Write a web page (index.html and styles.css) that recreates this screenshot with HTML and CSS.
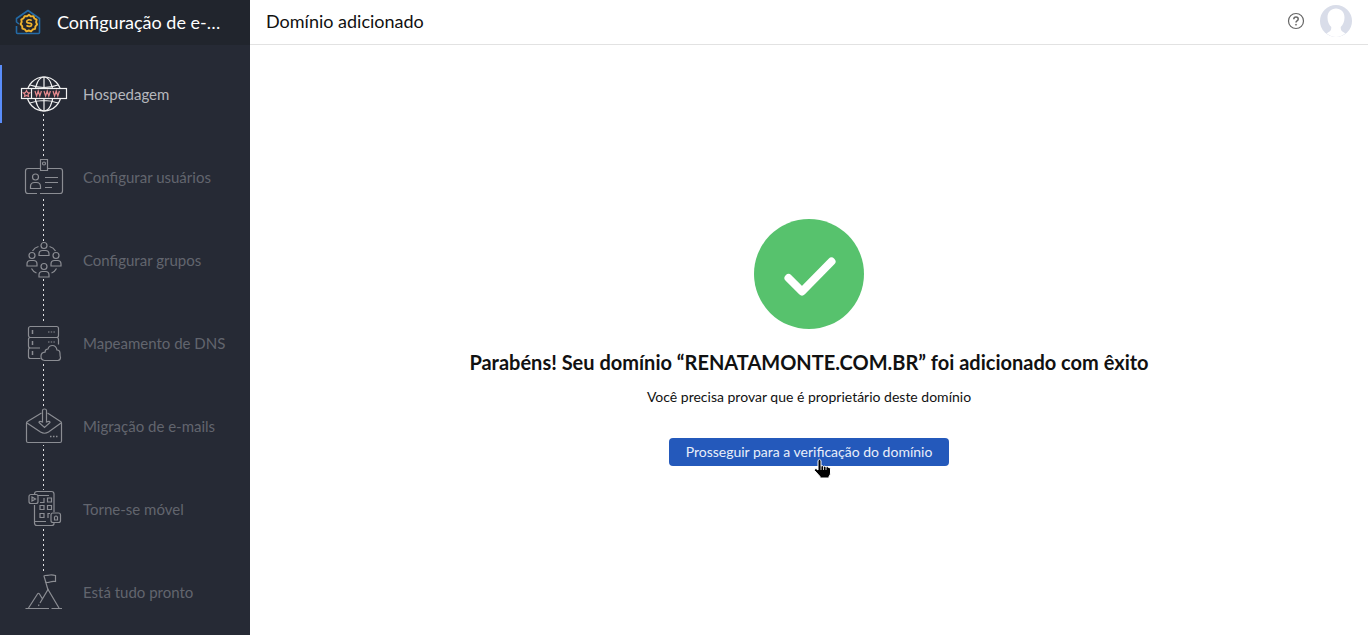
FILE: index.html
```html
<!DOCTYPE html>
<html lang="pt-BR">
<head>
  <meta charset="UTF-8">
  <meta name="viewport" content="width=device-width, initial-scale=1.0">
  <title>Configuração de e-mail</title>
  <link rel="stylesheet" href="styles.css">
</head>
<body>
  <aside class="sidebar">
    <div class="brand">
      <svg class="brand-logo" width="26" height="26" viewBox="0 0 26 26" fill="none" stroke-linejoin="round">
        <path d="M1.500 17v6.500q0 1 1 1h21q1 0 1-1V9.500L13 1.500 1.500 9.500v3.500l2.500 2" stroke="#246aa5" stroke-width="1.600"/>
        <path d="M14 5.800l1.900 1.600 2.500-.2 1 2.300 2.200 1.200-.5 2.500 1 2.300-1.700 1.800-.3 2.500-2.400.7-1.600 1.900-2.300-.9-2.400.8-1.600-2-2.400-.7-.2-2.500-1.600-1.900 1.100-2.200-.4-2.500 2.200-1.200 1.100-2.200 2.500.2z" stroke="#eeb22e" stroke-width="1.900"/>
        <path d="M16.700 11.700c-1.700-1.600-5-1-5 1 0 2.200 5 .8 5 3 0 2-3.500 2.300-5.200.7" stroke="#eeb22e" stroke-width="1.700"/>
      </svg>
      <span class="brand-name">Configuração de e-mail</span>
    </div>

    <ol class="steps">
      <li class="step active">
        <svg class="step-icon" width="48" height="38" viewBox="0 0 48 38">
          <circle cx="24" cy="19" r="17"/>
          <ellipse cx="24" cy="19" rx="9" ry="17"/>
          <path d="M24 2v34M7 19h34M10 10q14 5 28 0M10 28q14-5 28 0"/>
          <rect class="plate" x="1.500" y="13.500" width="45" height="10"/>
          <path d="M11.500 13.500v10"/>
          <path class="accent" d="M6.500 15.500l1 2 2.200.3-1.600 1.500.4 2.200-2-1-2 1 .4-2.200-1.600-1.500 2.200-.3z"/>
          <path class="accent" d="M15 16l1.600 5 1.600-5 1.600 5 1.600-5M24 16l1.600 5 1.600-5 1.600 5 1.600-5M33 16l1.600 5 1.600-5 1.600 5 1.600-5"/>
        </svg>
        <a href="#hospedagem">Hospedagem</a>
      </li>
      <li class="step">
        <svg class="step-icon" width="48" height="38" viewBox="0 0 48 38">
          <path d="M20.500 10.500H8q-2.500 0-2.500 2.500v20q0 2.500 2.500 2.500h9M20 35.500h20q2.500 0 2.500-2.500V13q0-2.500-2.500-2.500H27.500"/>
          <path d="M20.500 1.500h7v11h-7z"/>
          <circle cx="24" cy="5.500" r="1.500"/>
          <circle cx="15.500" cy="19" r="3"/>
          <path d="M10.500 30.500v-2q0-4 4-4h2q4 0 4 4v2zM25 19.500h13M25 24.500h13M25 29.500h7"/>
        </svg>
        <a href="#usuarios">Configurar usuários</a>
      </li>
      <li class="step">
        <svg class="step-icon" width="48" height="38" viewBox="0 0 48 38">
          <circle cx="24" cy="4.500" r="3"/>
          <path d="M19 14.500v-1.500q0-3.500 3.500-3.500h3q3.500 0 3.500 3.500v1.500z"/>
          <circle cx="12" cy="14.500" r="3"/>
          <path d="M7 25v-2q0-3.500 3.500-3.500h3q3.500 0 3.500 3.500v2z"/>
          <circle cx="36" cy="14.500" r="3"/>
          <path d="M31 25v-2q0-3.500 3.500-3.500h3q3.500 0 3.500 3.500v2z"/>
          <circle cx="24" cy="25.500" r="3"/>
          <path d="M19 36v-2q0-3.500 3.500-3.500h3q3.500 0 3.500 3.500v2z"/>
          <path d="M12.500 10q2-3.500 6-4.500M29.500 5.500q4 1 6 4.500M11.500 27.500q1.500 3 5 4.500M31.500 32q3.500-1.500 5-4.500"/>
        </svg>
        <a href="#grupos">Configurar grupos</a>
      </li>
      <li class="step">
        <svg class="step-icon" width="48" height="38" viewBox="0 0 48 38">
          <rect x="8.500" y="2.500" width="30" height="11" rx="2"/>
          <path d="M38.500 20v-4.500q0-2-2-2h-26q-2 0-2 2v6.500q0 2 2 2h9.500M10.500 24q-2 0-2 2v6.500q0 2 2 2h10M36.500 13.500q2 0 2 2v5"/>
          <path d="M12.500 6v4M12.500 17v4M12.500 27v4" stroke-width="1.500"/>
          <path d="M28 8h7M28 18h7" stroke-dasharray="1.500 1.200"/>
          <path class="plate" d="M24.500 36.500q-3.500-.5-3.500-4.300 0-3.700 4-4 0-3 3-3.200.8-3.500 4.500-3.500 3.500 0 4.500 4.500 3 0 3 3.500 0 3 .500 4 0 2.500-2.500 3z"/>
        </svg>
        <a href="#dns">Mapeamento de DNS</a>
      </li>
      <li class="step">
        <svg class="step-icon" width="48" height="38" viewBox="0 0 48 38">
          <path d="M21.500 6L7.500 14.500q-1 .5-1 1.500v18q0 1.500 1.500 1.500h32q1.500 0 1.500-1.500V16q0-1-1-1.500L27.500 6"/>
          <path d="M7 16l13.500 9q4 2.500 8 0L41 16"/>
          <path d="M22.500 3.500q0-1.500 2-1.500t2 1.500v11.500q3.500-1.500 3.500.5l-5.500 5-5.500-5q0-2 3.500-.5z"/>
          <path d="M30 29.500h8" stroke-width="1.500" stroke-dasharray="1.500 1.500"/>
        </svg>
        <a href="#migracao">Migração de e-mails</a>
      </li>
      <li class="step">
        <svg class="step-icon" width="48" height="38" viewBox="0 0 48 38">
          <path d="M14.500 7V4q0-2.500 2.500-2.500h14.500q2.500 0 2.500 2.500v18M34 33v.500q0 2-2.500 2H17q-2.500 0-2.500-2.500V15M18 5.500h11M14.500 31.500H26"/>
          <rect class="plate" x="9" y="4.500" width="9" height="9" rx="2"/>
          <path d="M12 7l3.500 2-3.500 2z"/>
          <path d="M20 12.500h4V8M27.500 8h4v4h-4zM20 15.500h4v4h-4zM27.500 15.500h4v4h-4zM20 23.500h4v4h-4zM28 28v-4.500h2"/>
          <rect class="plate" x="31" y="23" width="9.500" height="9.500" rx="2"/>
          <path d="M34.500 27q1.500-2 3 0v3h-3z"/>
        </svg>
        <a href="#movel">Torne-se móvel</a>
      </li>
      <li class="step">
        <svg class="step-icon" width="48" height="38" viewBox="0 0 48 38">
          <path d="M5.500 35.500H29M31.500 35.500H42"/>
          <path d="M8.500 35L17.500 21q1-1.500 2 0l3 5M18.500 33l.500-1.500M20 30l8-13.500L39 35"/>
          <path d="M28 17L24 3l1-.5q3 0 5-.5t5.500.5v6q-3-.5-5.500.5t-5 0"/>
        </svg>
        <a href="#pronto">Está tudo pronto</a>
      </li>
    </ol>
  </aside>

  <div class="page">
    <header class="topbar">
      <h1>Domínio adicionado</h1>
      <button class="icon-btn" type="button" aria-label="Ajuda">
        <svg width="18" height="18" viewBox="0 0 18 18" fill="none" stroke="#666">
          <circle cx="9" cy="9" r="7.500" stroke-width="1.200"/>
          <path d="M6.800 7.200q0-2.200 2.200-2.200t2.200 2q0 1.200-1.200 1.900-1 .6-1 1.700" stroke-width="1.500"/>
          <circle cx="9" cy="12.700" r=".6" fill="#666" stroke-width=".6"/>
        </svg>
      </button>
      <button class="icon-btn" type="button" aria-label="Perfil">
        <svg width="32" height="32" viewBox="0 0 32 32">
          <circle cx="16" cy="16" r="16" fill="#d9dde9"/>
          <path d="M16 3.500c5 0 8.500 3.500 8.500 9 0 4-1.500 7.500-3.800 9.500 0 4 1.300 4.500 4.800 6.300A16 16 0 0 1 16 32a16 16 0 0 1-9.500-3.700c3.500-1.800 4.800-2.300 4.800-6.300-2.300-2-3.800-5.500-3.800-9.500 0-5.500 3.500-9 8.500-9z" fill="#fff"/>
        </svg>
      </button>
    </header>

    <main class="content">
      <svg class="success" width="110" height="110" viewBox="0 0 110 110">
        <circle cx="55" cy="55" r="55" fill="#57c26d"/>
        <path d="M34.500 59L48 72.500 77.500 42.500" fill="none" stroke="#fff" stroke-width="8" stroke-linecap="round" stroke-linejoin="round"/>
      </svg>
      <h2>Parabéns! Seu domínio “RENATAMONTE.COM.BR” foi adicionado com êxito</h2>
      <p>Você precisa provar que é proprietário deste domínio</p>
      <div class="action">
        <button class="primary" type="button">Prosseguir para a verificação do domínio</button>
        <svg class="pointer" width="20" height="22" viewBox="0 0 20 22">
          <path d="M5 2.500Q6.500 0 8 2.500V8q1.500-1 2.500.5 1.500-1 2.500.5 1.500-1 2.500.5 2-.5 2 1.500v4q0 2-1.500 3.500V20H7v-1.500L1.500 12.500q-.5-2 1.500-2l2 1.500z" fill="#000" stroke="#fff"/>
          <path d="M8 8v4M10.500 8.500V12M13 9v3" stroke="#fff" stroke-width=".8"/>
        </svg>
      </div>
    </main>
  </div>
</body>
</html>
```
FILE: styles.css
```css
* {
  box-sizing: border-box;
}
body {
  margin: 0;
  min-height: 100vh;
  display: flex;
  font-family: Lato, "Liberation Sans", sans-serif;
  color: #111;
  background-color: #fff;
}
button {
  font-family: inherit;
  border: none;
  cursor: pointer;
}

/* Sidebar */
.sidebar {
  flex: 0 0 250px;
  min-width: 0;
  background-color: #262a35;
}
.brand {
  display: flex;
  align-items: center;
  gap: 16px;
  height: 45px;
  padding: 0 24px 2px 15px;
  background-color: #21252d;
  color: #fff;
  font-size: 18px;
}
.brand-logo {
  flex: none;
}
.brand-name {
  overflow: hidden;
  white-space: nowrap;
  text-overflow: ellipsis;
}
.steps {
  display: flex;
  flex-direction: column;
  gap: 25px;
  list-style: none;
  margin: 20px 0 0;
  padding: 0;
  /* dotted line that links the icons */
  background: repeating-linear-gradient(#e4e4e6 0 2px, transparent 2px 5px) 43px 29px / 1px 498px no-repeat;
}
.step {
  display: flex;
  align-items: center;
  gap: 15px;
  height: 58px;
  padding-left: 18px;
  border-left: 2px solid transparent;
}
.step.active {
  border-left-color: #5a8dfa;
}
.step a {
  color: #62656e;
  font-size: 15px;
  line-height: 20px;
  text-decoration: none;
}
.step.active a {
  color: #b5b7bd;
}
.step-icon {
  flex: none;
  background-color: #262a35;
  fill: none;
  stroke: #8b8d93;
  stroke-width: 1.2;
}
.step-icon .plate {
  fill: #262a35;
}
.active .step-icon {
  stroke: #f2f2f2;
}
.active .step-icon .accent {
  stroke: #e58a8e;
}

/* Page */
.page {
  flex: 1;
  display: flex;
  flex-direction: column;
  min-width: 0;
}
.topbar {
  display: flex;
  align-items: center;
  gap: 15px;
  height: 45px;
  padding: 0 16px 3px;
  border-bottom: 1px solid #e2e2e2;
}
.topbar h1 {
  flex: 1;
  margin: 0;
  font-size: 18px;
  font-weight: normal;
}
.icon-btn {
  display: flex;
  padding: 0;
  background: none;
}
.content {
  flex: 1;
  display: flex;
  flex-direction: column;
  align-items: center;
  justify-content: center;
  padding-top: 5px;
  text-align: center;
}
.content h2 {
  margin: 19px 0 0;
  font-size: 20px;
  line-height: 28px;
}
.content p {
  margin: 11px 0 31px;
  font-size: 14px;
  line-height: 20px;
}
.action {
  position: relative;
}
.primary {
  height: 28px;
  padding: 0 17px 2px;
  border-radius: 4px;
  background-color: #2459bb;
  color: #e9effa;
  font-size: 14px;
}
.pointer {
  position: absolute;
  left: 144px;
  top: 20px;
  pointer-events: none;
}
```
